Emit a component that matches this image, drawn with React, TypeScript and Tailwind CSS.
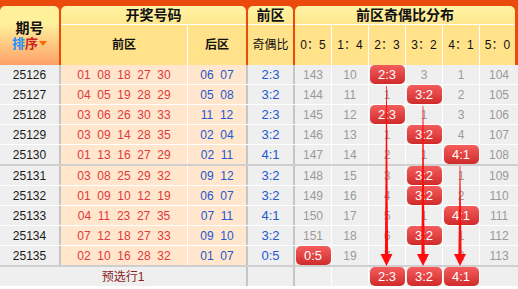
import React from 'react';

type Row = {
  qh: string;
  front: string;
  back: string;
  ratio: string;
  dist: (number | 'B')[];
};

const labels = ['0:5', '1:4', '2:3', '3:2', '4:1', '5:0'];
const headLabels = ['0：5', '1：4', '2：3', '3：2', '4：1', '5：0'];

const rows: Row[] = [
  { qh: '25126', front: '01  08  18  27  30', back: '06  07', ratio: '2:3', dist: [143, 10, 'B', 3, 1, 104] },
  { qh: '25127', front: '04  05  19  28  29', back: '05  08', ratio: '3:2', dist: [144, 11, 1, 'B', 2, 105] },
  { qh: '25128', front: '03  06  26  30  33', back: '11  12', ratio: '2:3', dist: [145, 12, 'B', 1, 3, 106] },
  { qh: '25129', front: '03  09  14  28  35', back: '02  04', ratio: '3:2', dist: [146, 13, 1, 'B', 4, 107] },
  { qh: '25130', front: '01  13  16  27  29', back: '02  11', ratio: '4:1', dist: [147, 14, 2, 1, 'B', 108] },
  { qh: '25131', front: '03  08  25  29  32', back: '09  12', ratio: '3:2', dist: [148, 15, 3, 'B', 1, 109] },
  { qh: '25132', front: '01  09  10  12  19', back: '06  07', ratio: '3:2', dist: [149, 16, 4, 'B', 2, 110] },
  { qh: '25133', front: '04  11  23  27  35', back: '07  11', ratio: '4:1', dist: [150, 17, 5, 1, 'B', 111] },
  { qh: '25134', front: '07  12  18  27  33', back: '09  10', ratio: '3:2', dist: [151, 18, 6, 'B', 1, 112] },
  { qh: '25135', front: '02  10  16  28  32', back: '01  07', ratio: '0:5', dist: ['B', 19, 7, 1, 2, 113] },
];

function Badge({ text }: { text: string }) {
  return (
    <div className="w-[35px] h-[19px] rounded-[5px] bg-linear-to-b from-[#f45c5c] to-[#cf2a2a] flex items-center justify-center text-white text-[13px] leading-none">
      {text}
    </div>
  );
}

function DistCells({ values }: { values: (number | 'B' | '')[] }) {
  return (
    <>
      {values.map((v, i) => (
        <div
          key={i}
          className={
            i < 5
              ? 'w-[37px] h-full border-r border-white bg-[#efefef] flex items-center justify-center text-[12px] text-[#9a9a9a]'
              : 'flex-1 h-full bg-[#efefef] flex items-center justify-center text-[12px] text-[#9a9a9a]'
          }
        >
          {v === 'B' ? <Badge text={labels[i]} /> : v}
        </div>
      ))}
    </>
  );
}

function DataRow({ r, groupEnd }: { r: Row; groupEnd: boolean }) {
  return (
    <div className={groupEnd ? 'flex h-[21px] border-b-2 border-[#cfcfcf]' : 'flex h-[20px] border-b border-white'}>
      <div className="w-[61px] h-full border-r-2 border-[#c6c6c6] bg-[#efefef] flex items-center justify-center text-[12px] text-[#1a1a1a]">
        {r.qh}
      </div>
      <div className="w-[127px] h-full border-r border-white bg-[#ffe6cc] flex items-center justify-center whitespace-pre text-[12px] text-[#e0393b]">
        {r.front}
      </div>
      <div className="w-[60px] h-full border-r-2 border-[#c6c6c6] bg-[#ffe6cc] flex items-center justify-center whitespace-pre text-[12px] text-[#2458d2]">
        {r.back}
      </div>
      <div className="w-[47px] h-full border-r-2 border-[#c6c6c6] bg-[#efefef] flex items-center justify-center text-[13px] text-[#2458d2]">
        {r.ratio}
      </div>
      <DistCells values={r.dist} />
    </div>
  );
}

// tapered red arrow drawn over the grid
function Arrow({ x, y1, y2 }: { x: number; y1: number; y2: number }) {
  const head = y2 - 12;
  return (
    <g fill="#ff0d0d">
      <polygon points={`${x - 0.35},${y1} ${x + 0.35},${y1} ${x + 1.6},${head} ${x - 1.6},${head}`} />
      <polygon points={`${x - 6},${head} ${x + 6},${head} ${x},${y2}`} />
    </g>
  );
}

export default function App() {
  return (
    <div className="relative w-[518px] h-[289px] overflow-hidden bg-white font-['Liberation_Sans','Noto_Sans_CJK_SC',sans-serif]">
      {/* Header */}
      <div className="flex h-[65px] pt-[6px] pr-[3px] gap-[2px] bg-[#ea4a0b] text-[#111]">
        <div className="w-[59px] h-full rounded-t-[5px] bg-linear-to-b from-[#fff09c] from-30% to-[#ffa068] flex flex-col items-center justify-center leading-[16px]">
          <span className="text-[14px] font-bold">期号</span>
          <span className="flex items-center text-[13px] font-bold">
            <span className="text-[#1e90ff]">排</span>
            <span className="text-[#cc2222]">序</span>
            <span className="ml-[1px] w-0 h-0 border-x-[4px] border-x-transparent border-t-[5px] border-t-[#ff6a00]" />
          </span>
        </div>

        <div className="w-[185px] h-full rounded-t-[5px] overflow-hidden flex flex-col">
          <div className="h-[19px] border-b border-white bg-linear-to-b from-[#fff3a4] to-[#ffe88e] flex items-center justify-center text-[14px] font-bold">
            开奖号码
          </div>
          <div className="flex-1 flex bg-[#ffe28a]">
            <div className="w-[127px] border-r border-white flex items-center justify-center text-[12px] font-bold">前区</div>
            <div className="flex-1 flex items-center justify-center text-[12px] font-bold">后区</div>
          </div>
        </div>

        <div className="w-[45px] h-full rounded-t-[5px] overflow-hidden flex flex-col">
          <div className="h-[19px] border-b border-white bg-linear-to-b from-[#fff3a4] to-[#ffe88e] flex items-center justify-center text-[14px] font-bold">
            前区
          </div>
          <div className="flex-1 bg-[#ffe28a] flex items-center justify-center text-[12px]">奇偶比</div>
        </div>

        <div className="flex-1 h-full rounded-t-[5px] overflow-hidden flex flex-col">
          <div className="h-[19px] border-b border-white bg-linear-to-b from-[#fff3a4] to-[#ffe88e] flex items-center justify-center text-[14px] font-bold">
            前区奇偶比分布
          </div>
          <div className="flex-1 flex bg-[#ffe28a]">
            {headLabels.map((l, i) => (
              <div
                key={l}
                className={
                  i < 5
                    ? 'w-[37px] border-r border-white flex items-center justify-center text-[12px]'
                    : 'flex-1 flex items-center justify-center text-[12px]'
                }
              >
                {l}
              </div>
            ))}
          </div>
        </div>
      </div>

      {/* Rows */}
      {rows.map((r, i) => (
        <DataRow key={r.qh} r={r} groupEnd={i === 4 || i === 9} />
      ))}

      {/* Forecast row */}
      <div className="flex h-[20px] border-b border-white">
        <div className="w-[248px] h-full border-r-2 border-[#c6c6c6] bg-[#efefef] flex items-center justify-center text-[12px] text-[#8b1c1c]">
          预选行1
        </div>
        <div className="w-[47px] h-full border-r-2 border-[#c6c6c6] bg-[#efefef]" />
        <DistCells values={['', '', 'B', 'B', 'B', '']} />
      </div>

      {/* Arrows */}
      <svg className="absolute inset-0 pointer-events-none" width="518" height="289">
        <Arrow x={386.5} y1={86} y2={266} />
        <Arrow x={423} y1={106} y2={266} />
        <Arrow x={460} y1={166} y2={266} />
      </svg>
    </div>
  );
}
